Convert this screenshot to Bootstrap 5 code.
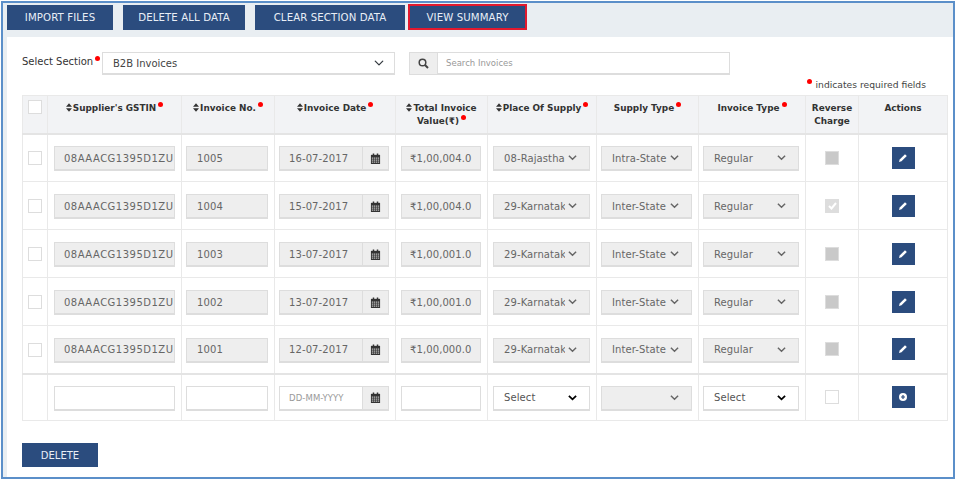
<!DOCTYPE html>
<html lang="en"><head><meta charset="utf-8"><title>B2B Invoices</title>
<link href="https://cdn.jsdelivr.net/npm/bootstrap@5.3.0/dist/css/bootstrap.min.css" rel="stylesheet">
<style>
html,body{margin:0;background:#fff;overflow:hidden}
body{font-family:"DejaVu Sans",Verdana,sans-serif;font-size:9.5px;color:#333;width:956px;height:481px}
.shot-frame{margin:1px 1px 2px 1px;height:478px;border:2px solid #5b8fc9;background:#e9eef2;display:flex;flex-direction:column;overflow:hidden}
.top-bar{flex:none;display:flex;gap:10px;height:34px;padding:2px 0 0 4px;align-items:flex-start}
.tb-btn{background:#2b4c7e;color:#e8eef6;border:0;border-radius:0;font-size:10.2px;height:25px;padding:1px 0 0;display:flex;align-items:center;justify-content:center;letter-spacing:.1px}
.tb-btn.w1{width:106px}.tb-btn.w2{width:122px}.tb-btn.w3{width:150px}.tb-btn.w4{width:119px;margin-left:-7px;outline:2px solid #e3192e;outline-offset:-2px;height:26px;margin-top:-1px}
.panel{flex:1;margin-left:4px;background:#fff;padding:15px 6px 0 15px;position:relative}
.sel-row{display:flex;align-items:flex-start;height:43px}
.sel-label{width:80px;font-size:10px;color:#333;padding-top:2px;white-space:nowrap}
.fld{height:23px;border:1px solid #ddd;border-bottom-width:2px;border-radius:0;font-size:9.5px;color:#555;background-color:#fff;box-shadow:none;padding:0 10px}
.sec-select{width:293px;flex:none;color:#444;font-size:10px;background-position:right 10px center;background-size:10px}
.srch{display:flex;width:321px;margin-left:14px}
.srch-ico{width:28px;height:23px;background:#eee;border:1px solid #ddd;border-right:0;display:flex;align-items:center;justify-content:center}
.srch input{flex:1;font-size:8.5px;padding-left:8px}
.srch input::placeholder{color:#999}
.req-note{position:absolute;top:41px;right:27px;font-size:9.2px;color:#444;white-space:nowrap}
.rdot{display:inline-block;width:5px;height:5px;border-radius:50%;background:#f00;vertical-align:4px;margin-left:2px}
.inv-table{table-layout:fixed;width:925px;margin:0;border-color:#e8e8e8;font-size:9.500px;border-collapse:collapse}
.inv-table>*>tr>*{border:1px solid #e9e9e9;padding:2px 6px 0;vertical-align:middle}
.inv-table>tbody>tr>td:nth-child(3),.inv-table>tbody>tr>td:nth-child(4),.inv-table>tbody>tr>td:nth-child(7),.inv-table>tbody>tr>td:nth-child(8){padding-left:4px}
.inv-table>tbody>tr>td:nth-child(5),.inv-table>tbody>tr>td:nth-child(6){padding-left:5px}
.inv-table thead th{background:#f2f3f5;height:38px;font-size:8.9px;font-weight:700;color:#333;text-align:center;vertical-align:top;padding:6px 2px 0;line-height:13px;border-bottom:2px solid #e4e4e4;white-space:nowrap}
.inv-table tbody tr{height:48px}
.inv-table tbody tr:last-child{height:47px}
.inv-table tbody tr:last-child td{border-top:2px solid #e4e4e4}
.inv-table>tbody>tr>td{--bs-table-accent-bg:transparent;background:#fff}
.inv-table>tbody>tr>td.cc{padding:0 0 0 5px}
.inv-table>thead>tr>th.hc{padding:4px 0 0 5px}
.ck{width:14px;height:14px;border:1px solid #ddd;background:#fff;display:block;margin-top:1px}
.ck-on{width:14px;height:14px;display:block;margin:-2px auto 0;background:#c9c9c9;border:1px solid #ddd}
.ck-on.ticked{background:#ddd;display:flex;align-items:center;justify-content:center}
.ck-blank{width:14px;height:14px;display:block;margin:-2px auto 0;border:1px solid #ddd;background:#fff}
.fx{display:block;width:100%;height:25px;border:1px solid #ddd;border-bottom-width:2px;border-radius:0;background-color:#eee;color:#666;font-size:10px;padding:0 8px;box-shadow:none;letter-spacing:.1px}
.fx.open{background-color:#fff;color:#555}
.fx.wide{padding-left:9px;padding-right:0;letter-spacing:.5px}
.fx.pad-l{padding-left:10px}
select.fx{padding:0 24px 0 10px;background-repeat:no-repeat;background-position:right 12px center;background-size:9px;appearance:none;background-image:url("data:image/svg+xml,%3Csvg xmlns='http://www.w3.org/2000/svg' viewBox='0 0 10 7'%3E%3Cpath d='M1 1l4 4 4-4' fill='none' stroke='%23666' stroke-width='1.6'/%3E%3C/svg%3E");opacity:1}
select.fx.open{background-image:url("data:image/svg+xml,%3Csvg xmlns='http://www.w3.org/2000/svg' viewBox='0 0 10 7'%3E%3Cpath d='M1 1l4 4 4-4' fill='none' stroke='%23000' stroke-width='2'/%3E%3C/svg%3E")}
.date-grp{display:flex;height:25px}
.date-grp .fx{flex:1;min-width:0;padding-left:9px}
.date-grp .fx.ph::placeholder{color:#999;font-size:8.5px}
.cal{width:27px;flex:none;background:#eee;border:1px solid #ddd;border-left-width:1px;border-bottom-width:2px;margin-left:-1px;display:flex;align-items:center;justify-content:center}
.act-btn{width:23px;height:22px;border:0;border-radius:0;background:#2b4c7e;display:flex;align-items:center;justify-content:center;padding:0;margin:-2px auto 0}
.del-btn{background:#2b4c7e;color:#e8eef6;border:0;border-radius:0;width:76px;height:24px;font-size:10px;margin-top:22px;padding:0;display:block}
.sort{display:inline-block;vertical-align:-1px;margin-right:1px}
</style></head><body>
<svg width="0" height="0" style="position:absolute"><defs>
<symbol id="i-cal" viewBox="0 0 12 12"><path d="M1 2h10v10H1z" fill="#333"/><path d="M3 .5h1.600v2.600H3zM7.400 .5H9v2.600H7.400z" fill="#333"/><path d="M2 5h1.500v1.300H2zM4.200 5h1.500v1.300H4.200zM6.400 5h1.500v1.300H6.400zM8.600 5h1.400v1.300H8.600zM2 7.200h1.500v1.300H2zM4.200 7.200h1.500v1.300H4.200zM6.400 7.200h1.500v1.300H6.400zM8.600 7.200h1.400v1.300H8.600zM2 9.400h1.500v1.300H2zM4.200 9.400h1.500v1.300H4.200zM6.400 9.400h1.500v1.300H6.400zM8.600 9.400h1.400v1.300H8.600z" fill="#bbb"/></symbol>
<symbol id="i-pen" viewBox="0 0 10 10"><path d="M7 1.200l1.800 1.800-5.300 5.300-2.500.7.700-2.500z" fill="#fff"/></symbol>
<symbol id="i-sort" viewBox="0 0 7 10"><path d="M3.500 0L7 4H0zM3.500 10L0 6h7z" fill="#333"/></symbol>
</defs></svg>
<div class="shot-frame">
<div class="top-bar">
<button class="btn tb-btn w1">IMPORT FILES</button>
<button class="btn tb-btn w2">DELETE ALL DATA</button>
<button class="btn tb-btn w3">CLEAR SECTION DATA</button>
<button class="btn tb-btn w4">VIEW SUMMARY</button>
</div>
<div class="panel">
<div class="sel-row">
<label class="sel-label">Select Section<span class="rdot"></span></label>
<select class="form-select fld sec-select"><option>B2B Invoices</option></select>
<div class="srch"><span class="srch-ico"><svg width="11" height="11" viewBox="0 0 11 11"><circle cx="4.500" cy="4.500" r="3.300" fill="none" stroke="#444" stroke-width="1.500"/><path d="M7 7l3 3" stroke="#444" stroke-width="2"/></svg></span><input class="form-control fld" placeholder="Search Invoices"></div>
</div>
<div class="req-note"><span class="rdot me-1"></span>indicates required fields</div>
<table class="table table-bordered inv-table mb-0">
<colgroup><col style="width:25px"><col style="width:134px"><col style="width:93px"><col style="width:121px"><col style="width:92px"><col style="width:109px"><col style="width:102px"><col style="width:107px"><col style="width:53px"><col style="width:89px"></colgroup>
<thead><tr>
<th class="hc text-start"><span class="ck" style="margin:0"></span></th>
<th><svg class="sort" width="6" height="9"><use href="#i-sort"/></svg>Supplier's GSTIN<span class="rdot"></span></th>
<th><svg class="sort" width="6" height="9"><use href="#i-sort"/></svg>Invoice No.<span class="rdot"></span></th>
<th><svg class="sort" width="6" height="9"><use href="#i-sort"/></svg>Invoice Date<span class="rdot"></span></th>
<th><svg class="sort" width="6" height="9"><use href="#i-sort"/></svg>Total Invoice<br>Value(₹)<span class="rdot"></span></th>
<th><svg class="sort" width="6" height="9"><use href="#i-sort"/></svg>Place Of Supply<span class="rdot"></span></th>
<th>Supply Type<span class="rdot"></span></th>
<th>Invoice Type<span class="rdot"></span></th>
<th>Reverse<br>Charge</th>
<th>Actions</th>
</tr></thead>
<tbody id="rows"></tbody>
</table>
<button class="btn del-btn">DELETE</button>
</div>
</div>
<script>
var d=[["1005","16-07-2017","₹1,00,004.0","08-Rajasthan","Intra-State",0],["1004","15-07-2017","₹1,00,004.0","29-Karnataka","Inter-State",1],["1003","13-07-2017","₹1,00,001.0","29-Karnataka","Inter-State",0],["1002","13-07-2017","₹1,00,001.0","29-Karnataka","Inter-State",0],["1001","12-07-2017","₹1,00,000.0","29-Karnataka","Inter-State",0]];
var cal='<span class="cal"><svg width="11" height="11"><use href="#i-cal"/></svg></span>';
var h='';
d.forEach(function(r){
h+='<tr><td class="cc"><span class="ck"></span></td>'
+'<td><input class="fx wide" readonly value="08AAACG1395D1ZU"></td>'
+'<td><input class="fx pad-l" readonly value="'+r[0]+'"></td>'
+'<td><div class="date-grp"><input class="fx" readonly value="'+r[1]+'">'+cal+'</div></td>'
+'<td><input class="fx" readonly value="'+r[2]+'"></td>'
+'<td><select class="fx" disabled><option>'+r[3]+'</option></select></td>'
+'<td><select class="fx" disabled><option>'+r[4]+'</option></select></td>'
+'<td><select class="fx" disabled><option>Regular</option></select></td>'
+'<td><span class="ck-on'+(r[5]?' ticked':'')+'">'+(r[5]?'<svg width="9" height="8" viewBox="0 0 9 8"><path d="M1 4l2.500 2.500L8 1" fill="none" stroke="#fff" stroke-width="2"/></svg>':'')+'</span></td>'
+'<td><button class="btn act-btn"><svg width="10" height="10"><use href="#i-pen"/></svg></button></td></tr>';
});
h+='<tr><td></td><td><input class="fx open"></td><td><input class="fx open"></td>'
+'<td><div class="date-grp"><input class="fx open ph" placeholder="DD-MM-YYYY">'+cal+'</div></td>'
+'<td><input class="fx open"></td>'
+'<td><select class="fx open"><option>Select</option></select></td>'
+'<td><select class="fx" disabled><option></option></select></td>'
+'<td><select class="fx open"><option>Select</option></select></td>'
+'<td><span class="ck-blank"></span></td>'
+'<td><button class="btn act-btn"><svg width="10" height="10" viewBox="0 0 10 10"><circle cx="5" cy="5" r="4" fill="#fff"/><path d="M5 3v4M3 5h4" stroke="#2b4c7e" stroke-width="1.200"/></svg></button></td></tr>';
document.getElementById('rows').innerHTML=h;
</script>
<script src="https://cdn.jsdelivr.net/npm/bootstrap@5.3.0/dist/js/bootstrap.bundle.min.js"></script>
</body></html>
